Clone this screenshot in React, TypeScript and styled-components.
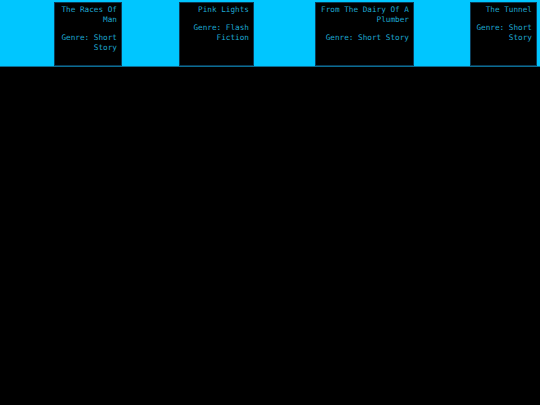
import React from 'react';
import styled, { createGlobalStyle } from 'styled-components';

interface Story {
  title: string;
  genre: string;
  width: number;
  offset: number;
}

const stories: Story[] = [
  { title: 'The Races Of Man', genre: 'Short Story', width: 68, offset: 54 },
  { title: 'Pink Lights', genre: 'Flash Fiction', width: 75, offset: 57 },
  { title: 'From The Dairy Of A Plumber', genre: 'Short Story', width: 99, offset: 61 },
  { title: 'The Tunnel', genre: 'Short Story', width: 67, offset: 56 },
];

const GlobalStyle = createGlobalStyle`
  html, body {
    margin: 0;
    padding: 0;
    background: #000;
  }
  body {
    width: 540px;
    height: 405px;
    overflow: hidden;
    font-family: "DejaVu Sans Mono", "Liberation Mono", monospace;
  }
`;

const Shelf = styled.header`
  display: flex;
  align-items: flex-start;
  height: 67px;
  padding-top: 2px;
  box-sizing: border-box;
  background: #00c6ff;
  border-bottom: 1px solid #0a6d92;
`;

const Card = styled.div<{ $width: number; $offset: number }>`
  flex: none;
  box-sizing: border-box;
  width: ${(p) => p.$width}px;
  height: 64px;
  margin-left: ${(p) => p.$offset}px;
  padding: 2px 4px 2px 2px;
  background: #000;
  border: 1px solid #0b3a55;
  color: #1ea8d2;
  font-size: 7.7px;
  line-height: 10px;
  text-align: right;
`;

const Line = styled.p`
  margin: 0 0 8px;
`;

const App: React.FC = () => {
  return (
    <>
      <GlobalStyle />
      <Shelf>
        {stories.map((s) => (
          <Card key={s.title} $width={s.width} $offset={s.offset}>
            <Line>{s.title}</Line>
            <Line>{`Genre: ${s.genre}`}</Line>
          </Card>
        ))}
      </Shelf>
    </>
  );
};

export default App;
